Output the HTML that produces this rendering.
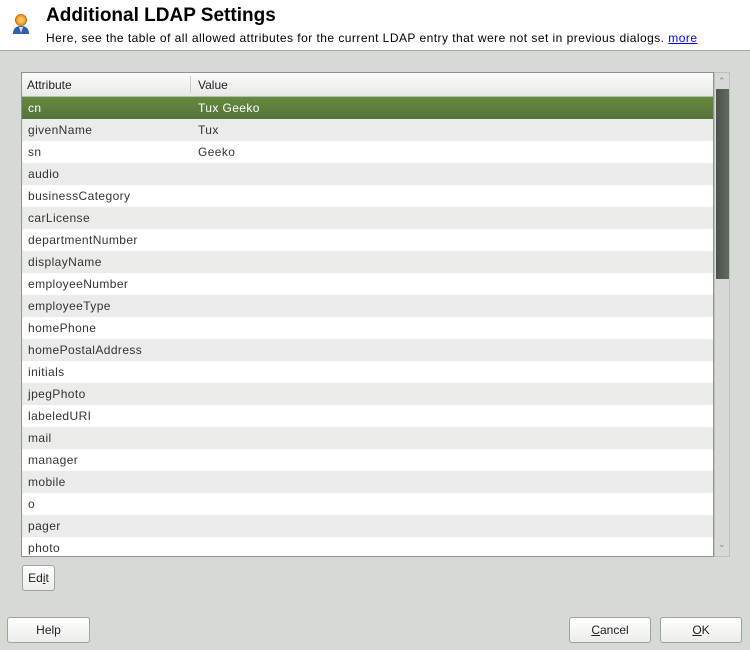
<!DOCTYPE html>
<html><head><style>
*{margin:0;padding:0;box-sizing:border-box}
body{width:750px;height:650px;background:#d6dad5;font-family:"Liberation Sans",sans-serif;position:relative;overflow:hidden;font-size:12px;color:#222}
.hdr{position:absolute;left:0;top:0;width:750px;height:51px;background:#fff;border-bottom:1px solid #a9ada8}
.t{position:absolute;left:46px;top:5px;font:bold 19px "Liberation Sans",sans-serif;color:#000}
.s{position:absolute;left:46px;top:31px;font-size:12px;color:#000;letter-spacing:0.46px;white-space:nowrap}
.s a{color:#00e;text-decoration:underline}
.tbl{position:absolute;left:21px;top:72px;width:693px;height:485px;border:1px solid #8e958c;background:#fff;overflow:hidden}
.th{height:24px;background:linear-gradient(#fcfcfc,#e8e8e6);border-bottom:1px solid #b8bcb6;position:relative}
.th span{position:absolute;top:5px}
.th i{position:absolute;left:168px;top:3px;width:1px;height:17px;background:#ccc}
.r{height:22px;position:relative;color:#333;letter-spacing:0.4px}
.r span{position:absolute;top:4px}
.r.sel{background:linear-gradient(#668a3e,#54733a)!important;color:#fff}
.c1{left:6px}.c2{left:176px}
.sb{position:absolute;left:714px;top:72px;width:16px;height:485px;background:#d6dad5;border:1px solid #bcc0ba}
.th2{position:absolute;left:1px;top:16px;width:13px;height:190px;background:linear-gradient(90deg,#4c524b,#636a62);}
.btn{position:absolute;height:26px;border:1px solid #9ea39c;border-radius:3px;background:linear-gradient(#fff,#ececea);text-align:center;line-height:24px;font-size:12px;color:#222}
</style></head><body>
<div class="hdr">
<svg style="position:absolute;left:11px;top:13px" width="20" height="22" viewBox="0 0 20 22"><path d="M2 21 Q2 13 10 13 Q18 13 18 21Z" fill="#2e5fa8"/><path d="M8 14 L10 20 L12 14Z" fill="#dde"/><circle cx="10" cy="7" r="5.5" fill="#f0a030" stroke="#c07010"/><circle cx="10" cy="7" r="3" fill="#f8c060"/></svg>
<div class="t">Additional LDAP Settings</div>
<div class="s">Here, see the table of all allowed attributes for the current LDAP entry that were not set in previous dialogs. <a>more</a></div>
</div>
<div class="tbl">
<div class="th"><span class="c1" style="left:5px">Attribute</span><i></i><span style="left:176px">Value</span></div>
<div>
<div class="r sel"><span class="c1">cn</span><span class="c2">Tux Geeko</span></div>
<div class="r" style="background:#ebebe9"><span class="c1">givenName</span><span class="c2">Tux</span></div>
<div class="r" style="background:#fff"><span class="c1">sn</span><span class="c2">Geeko</span></div>
<div class="r" style="background:#ebebe9"><span class="c1">audio</span></div>
<div class="r" style="background:#fff"><span class="c1">businessCategory</span></div>
<div class="r" style="background:#ebebe9"><span class="c1">carLicense</span></div>
<div class="r" style="background:#fff"><span class="c1">departmentNumber</span></div>
<div class="r" style="background:#ebebe9"><span class="c1">displayName</span></div>
<div class="r" style="background:#fff"><span class="c1">employeeNumber</span></div>
<div class="r" style="background:#ebebe9"><span class="c1">employeeType</span></div>
<div class="r" style="background:#fff"><span class="c1">homePhone</span></div>
<div class="r" style="background:#ebebe9"><span class="c1">homePostalAddress</span></div>
<div class="r" style="background:#fff"><span class="c1">initials</span></div>
<div class="r" style="background:#ebebe9"><span class="c1">jpegPhoto</span></div>
<div class="r" style="background:#fff"><span class="c1">labeledURI</span></div>
<div class="r" style="background:#ebebe9"><span class="c1">mail</span></div>
<div class="r" style="background:#fff"><span class="c1">manager</span></div>
<div class="r" style="background:#ebebe9"><span class="c1">mobile</span></div>
<div class="r" style="background:#fff"><span class="c1">o</span></div>
<div class="r" style="background:#ebebe9"><span class="c1">pager</span></div>
<div class="r" style="background:#fff"><span class="c1">photo</span></div>
</div>
</div>
<div class="sb"><div style="position:absolute;left:3px;top:3px;font-size:9px;color:#888">&#8963;</div><div class="th2"></div><div style="position:absolute;left:3px;top:466px;font-size:9px;color:#888">&#8964;</div></div>
<div class="btn" style="left:22px;top:565px;width:33px">Ed<u>i</u>t</div>
<div class="btn" style="left:7px;top:617px;width:83px">Help</div>
<div class="btn" style="left:569px;top:617px;width:82px"><u>C</u>ancel</div>
<div class="btn" style="left:660px;top:617px;width:82px"><u>O</u>K</div>
</body></html>
